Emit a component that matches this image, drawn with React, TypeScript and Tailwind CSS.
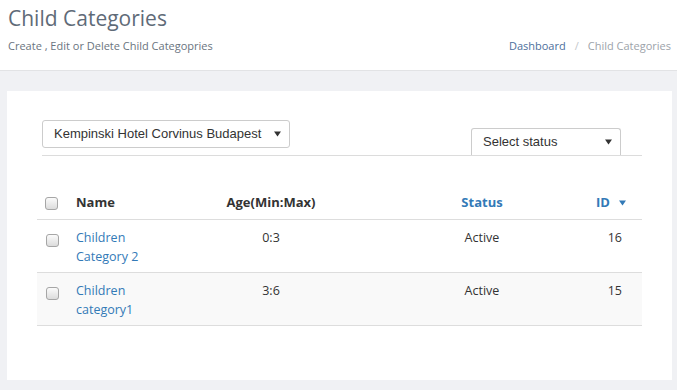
import React from "react";

type Row = {
    id: number;
    name: string;
    age: string;
    status: string;
};

const rows: Row[] = [
    { id: 16, name: "Children Category 2", age: "0:3", status: "Active" },
    { id: 15, name: "Children category1", age: "3:6", status: "Active" },
];

const Check = () => (
    <span className="inline-block w-[13px] h-[13px] rounded-[3px] border border-[#a6a6a6] bg-gradient-to-b from-[#fbfbfb] to-[#dcdcdc]" />
);

const Arrow = ({ color = "#333" }: { color?: string }) => (
    <svg width="7" height="6" viewBox="0 0 7 6" className="shrink-0">
        <path d="M0 0.5 L7 0.5 L3.5 5.5 Z" fill={color} />
    </svg>
);

const FakeSelect = ({ label, className }: { label: string; className: string }) => (
    <div
        className={
            "flex items-center justify-between rounded-[3px] border border-[#cccccc] bg-white pl-[11px] pr-[8px] text-[13px] text-[#333] font-['Liberation_Sans',Arial,sans-serif] " +
            className
        }
    >
        <span>{label}</span>
        <Arrow />
    </div>
);

export default function App() {
    return (
        <div className="min-h-[390px] bg-[#f0f1f4] font-['Open_Sans',sans-serif]">
            <div className="h-[71px] bg-white border-b border-[#e2e3e5] pl-[8px] pr-[6px] pt-[6px]">
                <h1 className="text-[21px] leading-[25px] text-[#5f6b78]">Child Categories</h1>
                <div className="flex items-center justify-between mt-[7px] text-[11px] leading-[15px]">
                    <span className="text-[#6a7480]">Create , Edit or Delete Child Categopries</span>
                    <span>
                        <span className="text-[#4d6f9c]">Dashboard</span>
                        <span className="text-[#c4c7cb] px-[9px]">/</span>
                        <span className="text-[#9da3aa]">Child Categories</span>
                    </span>
                </div>
            </div>

            <div className="ml-[7px] mr-[5px] mt-[20px] h-[289px] bg-white px-[30px] pt-[29px]">
                <div className="ml-[5px] flex items-end justify-between border-b border-[#dcdcdc]">
                    <FakeSelect label="Kempinski Hotel Corvinus Budapest" className="w-[248px] h-[28px] mb-[7px]" />
                    <FakeSelect label="Select status" className="w-[150px] h-[27px] mr-[21px] rounded-b-none border-b-0" />
                </div>

                <table className="mt-[37px] w-full table-fixed border-collapse text-[12.5px] text-[#333]">
                    <colgroup>
                        <col className="w-[31px]" />
                        <col className="w-[112px]" />
                        <col className="w-[182px]" />
                        <col className="w-[240px]" />
                        <col className="w-[40px]" />
                    </colgroup>
                    <thead>
                        <tr className="border-b border-[#dddddd] text-[13px] font-bold leading-[19px]">
                            <th className="pl-[8px] pt-[1px] pb-[6px] text-left align-middle">
                                <span className="flex"><Check /></span>
                            </th>
                            <th className="px-[8px] pt-0 pb-[7px] text-left">Name</th>
                            <th className="px-[8px] pt-0 pb-[7px] text-center">Age(Min:Max)</th>
                            <th className="px-[8px] pt-0 pb-[7px] text-center text-[#337ab7]">Status</th>
                            <th className="pr-[16px] pt-0 pb-[7px] text-[#337ab7] whitespace-nowrap">
                                <div className="ml-[-30px] flex items-center justify-end gap-[9px]">
                                    ID
                                    <Arrow color="#337ab7" />
                                </div>
                            </th>
                        </tr>
                    </thead>
                    <tbody>
                        {rows.map((r, i) => (
                            <tr
                                key={r.id}
                                className={"border-b border-[#dddddd] leading-[19px] " + (i % 2 === 1 ? "bg-[#f9f9f9]" : "bg-white")}
                            >
                                <td className="pl-[9px] pt-[14px] pb-[23px] align-top">
                                    <span className="flex"><Check /></span>
                                </td>
                                <td className="px-[8px] pt-[8px] pb-[6px] align-top text-[#337ab7]">{r.name}</td>
                                <td className="px-[8px] pt-[8px] pb-[6px] align-top text-center">{r.age}</td>
                                <td className="px-[8px] pt-[8px] pb-[6px] align-top text-center">{r.status}</td>
                                <td className="pr-[20px] pt-[8px] pb-[6px] align-top text-right">{r.id}</td>
                            </tr>
                        ))}
                    </tbody>
                </table>
            </div>
        </div>
    );
}
